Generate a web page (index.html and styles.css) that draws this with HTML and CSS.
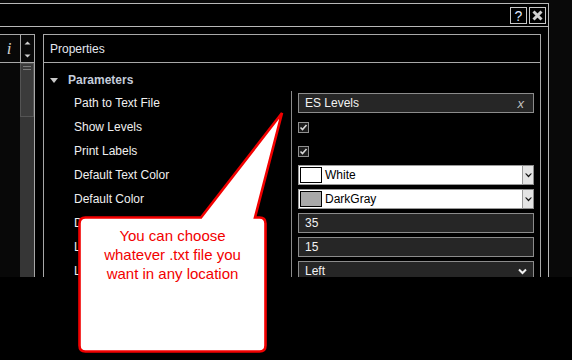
FILE: index.html
```html
<!DOCTYPE html>
<html lang="en">
<head>
  <meta charset="UTF-8" />
  <title>Indicator Properties</title>
  <link rel="stylesheet" href="styles.css">
</head>
<body>
  <div class="screen">
    <div class="window">
      <div class="titlebar">
        <span class="tb-btn">?</span>
        <span class="tb-btn">
          <svg width="15" height="15" viewBox="0 0 15 15"><path d="M3.5 3.5 L11.5 11.5 M11.5 3.5 L3.5 11.5" stroke="#d0d0d0" stroke-width="3" /></svg>
        </span>
      </div>
      <div class="workspace">
        <aside class="side">
          <div class="side-head">
            <span class="info">i</span>
            <span class="spin">
              <svg width="13" height="26" viewBox="0 0 13 26">
                <path d="M3.5 8.5 L6.5 5.5 L9.5 8.5 Z" fill="#d0d0d0" />
                <path d="M3.5 18.5 L6.5 21.5 L9.5 18.5 Z" fill="#d0d0d0" />
              </svg>
            </span>
          </div>
          <div class="side-body">
            <div class="track"><div class="thumb"><i></i><i></i></div></div>
          </div>
        </aside>
        <section class="props">
          <div class="props-head">Properties</div>
          <div class="group">
            <svg width="8" height="5" viewBox="0 0 8 5"><path d="M0 0 L8 0 L4 5 Z" fill="#c8c8c8" /></svg>
            <span>Parameters</span>
          </div>
          <div class="grid">
            <div class="label">Path to Text File</div>
            <div class="value"><div class="field"><span>ES Levels</span><span class="clear">x</span></div></div>

            <div class="label">Show Levels</div>
            <div class="value"><span class="check"><svg width="9" height="9" viewBox="0 0 9 9"><path d="M1.5 4.5 L3.5 6.5 L7.5 2" stroke="#d8d8d8" stroke-width="1.6" fill="none" /></svg></span></div>

            <div class="label">Print Labels</div>
            <div class="value"><span class="check"><svg width="9" height="9" viewBox="0 0 9 9"><path d="M1.5 4.5 L3.5 6.5 L7.5 2" stroke="#d8d8d8" stroke-width="1.6" fill="none" /></svg></span></div>

            <div class="label">Default Text Color</div>
            <div class="value">
              <div class="color-pick">
                <div class="color-main"><span class="swatch swatch-white"></span>White</div>
                <span class="drop"><svg width="7" height="5" viewBox="0 0 7 5"><path d="M0 0.5 L3.5 4.5 L7 0.5 L5.5 0.5 L3.5 2.5 L1.5 0.5 Z" fill="#111" /></svg></span>
              </div>
            </div>

            <div class="label">Default Color</div>
            <div class="value">
              <div class="color-pick">
                <div class="color-main"><span class="swatch swatch-gray"></span>DarkGray</div>
                <span class="drop"><svg width="7" height="5" viewBox="0 0 7 5"><path d="M0 0.5 L3.5 4.5 L7 0.5 L5.5 0.5 L3.5 2.5 L1.5 0.5 Z" fill="#111" /></svg></span>
              </div>
            </div>

            <div class="label">Decimals</div>
            <div class="value"><div class="field"><span>35</span></div></div>

            <div class="label">Label Offset</div>
            <div class="value"><div class="field"><span>15</span></div></div>

            <div class="label">Label Alignment</div>
            <div class="value">
              <div class="field"><span>Left</span>
                <svg class="chev" width="9" height="7" viewBox="0 0 9 7"><path d="M1 1.5 L4.5 5 L8 1.5" stroke="#f0f0f0" stroke-width="2" fill="none" /></svg>
              </div>
            </div>
          </div>
        </section>
      </div>
    </div>
  </div>

  <div class="callout">
    <svg width="290" height="360" viewBox="0 0 290 360">
      <path d="M85.5 217.5 L201 217.5 L282 113 L255 217.5 L259.5 217.5 Q265.5 217.5 265.5 223.5 L265.5 345.5 Q265.5 351.5 259.5 351.5 L85.5 351.5 Q79.5 351.5 79.5 345.5 L79.5 223.5 Q79.5 217.5 85.5 217.5 Z" fill="#fff" stroke="#f20000" stroke-width="2.6" stroke-linejoin="miter" />
    </svg>
    <p class="callout-text">You can choose<br>whatever .txt file you<br>want in any location</p>
  </div>
</body>
</html>
```

FILE: styles.css
```css
/* Reset */
* {
  margin: 0; padding: 0; box-sizing: border-box;
}
body {
  width: 572px;
  height: 360px;
  background: #000;
  font-family: 'Liberation Sans', Arial, sans-serif;
  font-size: 12px;
  color: #e6e6e6;
  position: relative;
  overflow: hidden;
}
/* window frame */
.screen {
  height: 277px;
  background: #090909;
  overflow: hidden;
}
.window {
  width: 549px;
  height: 274px;
  margin-top: 3px;
  border-top: 1px solid #b8b8b8;
  border-right: 1px solid #b8b8b8;
  background: #000;
  display: flex;
  flex-direction: column;
}
.titlebar {
  height: 23px;
  border-bottom: 1px solid #b8b8b8;
  display: flex;
  justify-content: flex-end;
  align-items: flex-start;
  gap: 2px;
  padding: 3px 2px 0 0;
}
.tb-btn {
  width: 17px;
  height: 17px;
  border: 1px solid #c8c8c8;
  display: flex;
  align-items: center;
  justify-content: center;
  color: #dfe8ff;
  font-size: 14px;
  line-height: 1;
}
.workspace {
  flex: 1;
  display: flex;
  gap: 8px;
  padding: 7px 7px 0 0;
  min-height: 0;
}
/* left strip */
.side {
  width: 35px;
  border-top: 1px solid #a8a8a8;
  border-right: 1px solid #a8a8a8;
  background: #080808;
  display: flex;
  flex-direction: column;
}
.side-head {
  height: 28px;
  border-bottom: 1px solid #a8a8a8;
  display: flex;
}
.info {
  width: 20px;
  display: flex;
  align-items: center;
  justify-content: center;
  padding-right: 2px;
  font-family: 'Liberation Serif', serif;
  font-style: italic;
  font-size: 17px;
  color: #d0d0d0;
}
.spin {
  width: 14px;
  border-left: 1px solid #a8a8a8;
  display: flex;
  align-items: center;
}
.side-body {
  flex: 1;
  display: flex;
  justify-content: flex-end;
}
.track {
  width: 14px;
  background: #363636;
}
.thumb {
  height: 54px;
  border: 1px solid #545454;
  background: #3b3b3b;
  padding: 2px 2px 0;
  display: flex;
  flex-direction: column;
  gap: 2px;
}
.thumb i {
  height: 1px;
  background: #7a7a7a;
}
/* properties */
.props {
  flex: 1;
  border-top: 1px solid #a8a8a8;
  border-left: 1px solid #a8a8a8;
  border-right: 1px solid #a8a8a8;
}
.props-head {
  height: 28px;
  border-bottom: 1px solid #a8a8a8;
  padding-left: 6px;
  display: flex;
  align-items: center;
  color: #e4e8f0;
}
.group {
  height: 28px;
  display: flex;
  align-items: center;
  gap: 10px;
  padding: 6px 0 0 6px;
  font-weight: 700;
  color: #c4ccdb;
}
.grid {
  display: grid;
  grid-template-columns: 247px 1fr;
  grid-auto-rows: 24px;
}
.label {
  padding-left: 30px;
  display: flex;
  align-items: center;
  color: #f0f0f0;
  white-space: nowrap;
  overflow: hidden;
}
.value {
  border-left: 1px solid #8a8a8a;
  padding: 0 6px;
  display: flex;
  align-items: center;
}
.field {
  flex: 1;
  height: 20px;
  border: 1px solid #8c8c8c;
  background: #262626;
  padding: 0 9px 0 6px;
  display: flex;
  align-items: center;
  justify-content: space-between;
  color: #f2f2f2;
}
.clear {
  font-style: italic;
  color: #c0c0c0;
  font-size: 13px;
}
.chev {
  margin-right: -3px;
}
.check {
  width: 11px;
  height: 11px;
  border: 1px solid #909090;
  background: #1c1c1c;
  display: flex;
  align-items: center;
  justify-content: center;
}
.color-pick {
  flex: 1;
  height: 20px;
  display: flex;
}
.color-main {
  flex: 1;
  border: 1px solid #9a9a9a;
  background: #fff;
  color: #000;
  display: flex;
  align-items: center;
  gap: 3px;
  padding-left: 1px;
}
.swatch {
  width: 22px;
  height: 16px;
  border: 1px solid #000;
}
.swatch-white { background: #fff; }
.swatch-gray { background: #a9a9a9; }
.drop {
  width: 11px;
  border: 1px solid #8c8c8c;
  border-left: 0;
  background: #e4e4e4;
  display: flex;
  align-items: center;
  justify-content: center;
}
/* callout overlay */
.callout {
  position: absolute;
  left: 0;
  top: 0;
}
.callout-text {
  position: absolute;
  left: 79px;
  top: 226px;
  width: 187px;
  text-align: center;
  font-size: 15px;
  line-height: 19px;
  color: #f20000;
}
```
